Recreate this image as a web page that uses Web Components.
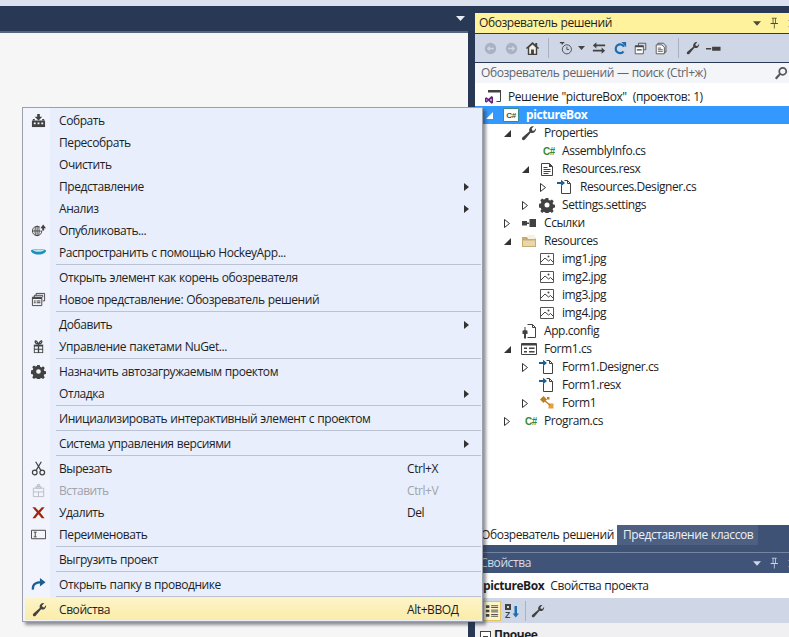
<!DOCTYPE html>
<html lang="ru"><head><meta charset="utf-8"><title>VS</title>
<style>
html,body{margin:0;padding:0;width:789px;height:637px;overflow:hidden;background:#293955}
body{font:12px/16px "Open Sans","Noto Sans","Liberation Sans",sans-serif;color:#1e1e1e;letter-spacing:-.42px;word-spacing:.4px}
</style></head><body>
<vs-shell>
  <vs-editor slot="left">
    <vs-menu>
      <vs-item><vs-icon slot="icon" name="build"></vs-icon>Собрать</vs-item>
      <vs-item>Пересобрать</vs-item>
      <vs-item>Очистить</vs-item>
      <vs-item submenu>Представление</vs-item>
      <vs-item submenu>Анализ</vs-item>
      <vs-item><vs-icon slot="icon" name="publish"></vs-icon>Опубликовать...</vs-item>
      <vs-item><vs-icon slot="icon" name="hockey"></vs-icon>Распространить с помощью HockeyApp...</vs-item>
      <vs-sep></vs-sep>
      <vs-item>Открыть элемент как корень обозревателя</vs-item>
      <vs-item><vs-icon slot="icon" name="newview"></vs-icon>Новое представление: Обозреватель решений</vs-item>
      <vs-sep></vs-sep>
      <vs-item submenu>Добавить</vs-item>
      <vs-item><vs-icon slot="icon" name="gift"></vs-icon>Управление пакетами NuGet...</vs-item>
      <vs-sep></vs-sep>
      <vs-item><vs-icon slot="icon" name="gear"></vs-icon>Назначить автозагружаемым проектом</vs-item>
      <vs-item submenu>Отладка</vs-item>
      <vs-sep></vs-sep>
      <vs-item>Инициализировать интерактивный элемент с проектом</vs-item>
      <vs-sep></vs-sep>
      <vs-item submenu>Система управления версиями</vs-item>
      <vs-sep></vs-sep>
      <vs-item shortcut="Ctrl+X"><vs-icon slot="icon" name="cut"></vs-icon>Вырезать</vs-item>
      <vs-item shortcut="Ctrl+V" disabled><vs-icon slot="icon" name="paste"></vs-icon>Вставить</vs-item>
      <vs-item shortcut="Del"><vs-icon slot="icon" name="del"></vs-icon>Удалить</vs-item>
      <vs-item><vs-icon slot="icon" name="rename"></vs-icon>Переименовать</vs-item>
      <vs-sep></vs-sep>
      <vs-item>Выгрузить проект</vs-item>
      <vs-sep></vs-sep>
      <vs-item><vs-icon slot="icon" name="open"></vs-icon>Открыть папку в проводнике</vs-item>
      <vs-sep></vs-sep>
      <vs-item shortcut="Alt+ВВОД" active><vs-icon slot="icon" name="wrench"></vs-icon>Свойства</vs-item>
    </vs-menu>
  </vs-editor>
  <vs-explorer slot="right">
    <vs-row level="0" icon="solution">Решение "pictureBox"&nbsp; (проектов: 1)</vs-row>
    <vs-row level="1" arrow="open" icon="csproj" selected>pictureBox</vs-row>
    <vs-row level="2" arrow="open" icon="wrench">Properties</vs-row>
    <vs-row level="3" icon="cs">AssemblyInfo.cs</vs-row>
    <vs-row level="3" arrow="open" icon="resx">Resources.resx</vs-row>
    <vs-row level="4" arrow="closed" icon="designer">Resources.Designer.cs</vs-row>
    <vs-row level="3" arrow="closed" icon="gear">Settings.settings</vs-row>
    <vs-row level="2" arrow="closed" icon="refs">Ссылки</vs-row>
    <vs-row level="2" arrow="open" icon="folder">Resources</vs-row>
    <vs-row level="3" icon="image">img1.jpg</vs-row>
    <vs-row level="3" icon="image">img2.jpg</vs-row>
    <vs-row level="3" icon="image">img3.jpg</vs-row>
    <vs-row level="3" icon="image">img4.jpg</vs-row>
    <vs-row level="2" icon="config">App.config</vs-row>
    <vs-row level="2" arrow="open" icon="form">Form1.cs</vs-row>
    <vs-row level="3" arrow="closed" icon="designer">Form1.Designer.cs</vs-row>
    <vs-row level="3" icon="designer">Form1.resx</vs-row>
    <vs-row level="3" arrow="closed" icon="klass">Form1</vs-row>
    <vs-row level="2" arrow="closed" icon="cs">Program.cs</vs-row>
  </vs-explorer>
</vs-shell>
<script>
const ICONS={
build:'<path fill="#424242" d="M1 8h14v7H1z"/><path fill="#424242" d="M2 6.500h2V8H2zM12 6.500h2V8h-2z"/><path fill="#f0f3fb" d="M3 10h2v2H3zM7 10h2v2H7zM11 10h2v2h-2z"/><path fill="#424242" d="M6.600 1h2.800v3H12L8 8 4 4h2.600z"/>',
publish:'<g fill="none" stroke="#424242"><circle cx="6.500" cy="8.500" r="5"/><ellipse cx="6.500" cy="8.500" rx="2.200" ry="5"/><path d="M1.500 8.500h10M6.500 3.500v10"/></g><path fill="#f0f3fb" d="M9.500 2h6v6h-6z"/><path fill="#424242" d="M12 8V5.500h-2L13 1.500l3 4h-2V8z"/>',
hockey:'<path fill="#1a8fc0" d="M0 5.500c2-1.200 14-1.200 16 0 0 2.800-3.200 4.500-8 4.500S0 8.300 0 5.500z"/><path fill="#bfe6ef" d="M1.800 5.400c3-.8 9.400-.8 12.400 0-1 1.200-3.400 1.900-6.200 1.900S2.800 6.600 1.800 5.400z"/>',
newview:'<g fill="none" stroke="#424242"><path d="M5.500 3.500V1.500h9v8h-2"/><path d="M3.500 5.500V3.500h9v2"/><path d="M1.500 5.500h10v9h-10z"/></g><path fill="#424242" d="M1.500 5.500h10v2h-10zM3 9h2v1H3zM6 9h4v1H6zM3 11h2v1H3zM6 11h4v1H6z"/>',
gift:'<path fill="#424242" d="M3 6h10v9H3z"/><path fill="#f0f3fb" d="M4 8h3.300v2.500H4zM8.700 8H12v2.500H8.700zM4 11.500h3.300V14H4zM8.700 11.500H12V14H8.700z"/><path fill="none" stroke="#424242" stroke-width="1.300" d="M8 5.500C5.500 1 4 1.500 4.500 3.500 5 5 7 5.500 8 5.500c1 0 3-.5 3.500-2C12 1.500 10.500 1 8 5.500z"/>',
gear:'<path fill="#424242" fill-rule="evenodd" d="M6.700 1h2.600l.4 2 1.500.6 1.700-1.100 1.800 1.800-1.100 1.700.6 1.500 2 .4v2.600l-2 .4-.6 1.500 1.100 1.700-1.800 1.800-1.700-1.100-1.500.6-.4 2H6.700l-.4-2-1.500-.6-1.700 1.100-1.800-1.800 1.100-1.700-.6-1.500-2-.4V6.900l2-.4.6-1.500-1.100-1.700 1.800-1.800 1.700 1.100 1.500-.6zM8 5.500a2.500 2.500 0 1 0 0 5 2.500 2.500 0 0 0 0-5z"/>',
cut:'<g fill="none" stroke="#424242" stroke-width="1.300"><circle cx="4" cy="12.300" r="2.500"/><circle cx="12" cy="12.300" r="2.500"/><path d="M5.300 10.200 11 .8M10.700 10.200 5 .8"/></g>',
paste:'<g fill="none" stroke="#b9bcc4"><path d="M2.500 5.500h11v9h-11zM5.500 3.500h5v2h-5zM7 1.500h2v2H7zM8 9.500v5M2.500 9.500h11"/></g>',
del:'<path fill="#a1260d" d="M1.500 2.500h3L8 6.200l3.500-3.700h3L9.700 8l4.800 6h-3L8 9.800 4.500 14h-3l4.800-6z"/>',
rename:'<path fill="#f3f5fb" stroke="#424242" d="M.5 3.500h15v9H.5z"/><path fill="none" stroke="#424242" d="M3 5.500h3M3 10.500h3M4.500 5.500v5"/>',
open:'<path fill="none" stroke="#1c5f94" stroke-width="2.400" d="M2 13.500C1.500 8 5 5.500 11 5.500"/><path fill="#1c5f94" d="M9.500 1 15.500 5.500 9.500 10z"/>',
wrench:'<path fill="#424242" d="M15 3.200a4 4 0 0 1-5.300 4.600L3.900 14.600c-.7.800-1.800.900-2.500.200-.7-.7-.6-1.800.2-2.500l6.700-5.800A4 4 0 0 1 13 1.300L10.700 3.600l.5 1.800 1.800.4z"/>',
solution:'<path fill="none" stroke="#424242" d="M3.500 1.500h12v11h-4"/><path fill="#424242" d="M3 1h13v2.500H3z"/><path fill="#68217a" d="M0 9l1.500-.8 2 1.500 3-2.700L8 8v6l-1.500.7-3-2.700-2 1.500L0 13zM1.500 10v2l1-1zM6.500 9.500 5 11l1.500 1.500z"/>',
csproj:'<path fill="#fff" stroke="#3c8b8b" d="M.5 1.500h15v13H.5z"/><text x="8" y="11" text-anchor="middle" font-family="Liberation Sans" font-size="8" font-weight="700" fill="#2b5a3c">C#</text>',
cs:'<text x="10" y="11.500" text-anchor="middle" font-family="Liberation Sans" font-size="10" font-weight="700" fill="#388a34">C#</text>',
resx:'<path fill="#fff" stroke="#424242" d="M2.500 2.500h8l3 3v9h-11z"/><path fill="none" stroke="#424242" d="M4.500 6.500h4M4.500 8.500h7M4.500 10.500h7M4.500 12.500h5"/><path fill="#424242" d="M10 2l4 4h-4z"/>',
designer:'<path fill="#fff" stroke="#424242" d="M4.500 6.500v8h9v-10l-3-3h-3"/><path fill="none" stroke="#424242" d="M10.500 1.500v3h3"/><path fill="#1c5f94" d="M0 3h4V.8L8 4 4 7.200V5H0z"/>',
refs:'<path fill="#424242" d="M1 6h5v4.500H1zM6 7.500h2v1.500H6zM8.500 4h6.500v8H8.500z"/>',
folder:'<path fill="#c9ab72" d="M1 4h5l1.500 1.500H15V14H1z"/><path fill="#e8d6ac" d="M2 7.500h12V13H2z"/><path fill="#f7f1e0" d="M6 2h8v4H7z"/>',
image:'<path fill="#fff" stroke="#555" d="M1.500 2.500h13v11h-13z"/><path fill="none" stroke="#424242" d="M2 11l4-4 3.500 3 2-1.500L14 11"/><circle cx="9.500" cy="5.500" r="1" fill="#424242"/>',
config:'<path fill="#fff" stroke="#424242" d="M6.500 1.500h5l3 3v10h-8"/><path fill="none" stroke="#424242" d="M11.500 1.500v3h3"/><path fill="#424242" d="M3.500 4h1v3l2 .8V11H5v4.500H3V11H1.500V7.800l2-.8z"/>',
form:'<path fill="#fff" stroke="#424242" d="M.5 2.500h15v11H.5z"/><path fill="#424242" d="M1 2.500h14v2H1zM3 6.500h3v1.500H3zM8 6.500h5.500v1.500H8zM3 10h3v1.500H3zM8 10h5.500v1.500H8z"/>',
klass:'<path fill="#c27d1a" d="M1 4.500 4.500 1 8 4.500 4.500 8z"/><path fill="#e0a040" d="M9.500 8.500h5v5h-5z"/><path fill="none" stroke="#c27d1a" stroke-width="1.500" d="M6 6l5 4"/><path fill="#c27d1a" d="M8 2h2.500v2.500H8z"/>',
back:'<circle cx="8" cy="8" r="7" fill="#aab2c2"/><path fill="#cfd6e5" d="M3.500 8 7 4.500V7h5v2H7v2.500z"/>',
fwd:'<circle cx="8" cy="8" r="7" fill="#aab2c2"/><path fill="#cfd6e5" d="M12.500 8 9 4.500V7H4v2h5v2.500z"/>',
home:'<path fill="#424242" d="M8 1 1 7.500l1 1L3 7.600V15h10V7.600l1 .9 1-1L13 5.700V2h-2v1.800z"/><path fill="#f5f2e4" d="M4.500 7 8 3.800 11.500 7v6.500h-2V9h-3v4.500h-2z"/>',
hist:'<circle cx="9" cy="9.500" r="5.200" fill="none" stroke="#424242"/><path fill="none" stroke="#424242" d="M9 6.500v3.200h2.500"/><path fill="#424242" d="M1 1h5v1.500H4.500V4H3V2.500H1z"/>',
sync:'<path fill="#424242" d="M1 5l4-3.500V4h10v2H5v2.500zM15 11l-4 3.500V12H1v-2h10V7.500z"/>',
refresh:'<path fill="none" stroke="#1c6eb4" stroke-width="2.500" d="M12.500 6.500A5 5 0 1 0 12 12"/><path fill="#1c6eb4" d="M9.500 1h5.500v6z"/>',
collapse:'<path fill="none" stroke="#424242" d="M5.500 4.500v-3h9v8h-3"/><path fill="#fff" stroke="#424242" d="M1.500 4.500h10v10h-10z"/><path fill="#424242" d="M1.500 4.500h10v2h-10zM3.500 9h6v1.500h-6z"/>',
allfiles:'<path fill="none" stroke="#424242" d="M3.500 3.500v-2h7l3 3v8h-2"/><path fill="#fff" stroke="#424242" d="M1.500 3.500h7l3 3v8h-10z"/><path fill="none" stroke="#424242" d="M3.500 7.500h4M3.500 9.500h6M3.500 11.500h6"/>',
minus:'<path fill="#424242" d="M0 7.500h5.500v1.500H0zM6.500 6h9v4.500h-9z"/>',
search:'<circle cx="10" cy="6" r="4" fill="none" stroke="#555" stroke-width="2"/><path stroke="#555" stroke-width="2.500" d="M7 9l-5 5.500"/>',
cat:'<path fill="#424242" d="M1 1.500h4v3H1zM1 6.500h4v3H1zM1 11.500h4v3H1z"/><path fill="none" stroke="#424242" d="M7 2h8M7 4h8M7 7h8M7 9h8M7 12h8M7 14h8"/>',
az:'<path fill="#424242" d="M1 1h6v6H1z"/><path fill="#cfd6e5" d="M3 3h2v2H3z"/><text x="1" y="15" font-family="Liberation Sans" font-size="8.500" font-weight="700" fill="#424242">Z</text><path fill="#1c6eb4" d="M10.500 3H13v7.500h2l-3.200 4-3.200-4h1.900z"/>',
pin:'<path fill="none" stroke="currentColor" d="M3.500 1.500h6M5 1.500v6M8 1.500v6"/><path fill="currentColor" d="M2 7.500h9v1H2zM6 8.500h1V14H6z"/>',
close:'<path stroke="currentColor" stroke-width="1.500" d="M2 2l8 8M10 2l-8 8"/>',
down:'<path fill="currentColor" d="M0 0h9L4.500 5z"/>'
};
function svg(n,s=16,extra=''){return `<svg xmlns="http://www.w3.org/2000/svg" width="${s}" height="${s}" viewBox="0 0 16 16" ${extra}>${ICONS[n]||''}</svg>`}
function def(name,css,html,init){
  customElements.define(name,class extends HTMLElement{
    constructor(){super();this.attachShadow({mode:'open'});}
    connectedCallback(){this.shadowRoot.innerHTML=`<style>${css}</style>`+(typeof html==='function'?html(this):html);init&&init(this);}
  });
}
const btn=(n,s=13)=>`<span class="b">${svg(n,s)}</span>`;
const ctl=`<div class="ctl"><svg width="8" height="5" viewBox="0 0 9 5">${ICONS.down}</svg>${svg('pin',13)}<svg class="x" width="11" height="11" viewBox="0 0 12 12">${ICONS.close}</svg></div>`;
def('vs-icon',':host{display:inline-flex;width:15px;height:15px}svg{display:block}',e=>svg(e.getAttribute('name'),15));

def('vs-shell',`
:host{display:grid;grid-template-rows:6px 631px;width:789px;height:637px;overflow:hidden}
.strip{background:#dce1ed}
.main{display:grid;grid-template-columns:468px 314px;column-gap:7px;background:#293955;min-height:0}
`,`<div class="strip"></div><div class="main"><slot name="left"></slot><slot name="right"></slot></div>`);

def('vs-editor',`
:host{display:grid;grid-template-rows:27px 1fr;position:relative;min-height:0}
.bar{display:flex;justify-content:flex-end;align-items:center;padding-right:3px;color:#e8ecf4;border-bottom:2px solid #56647f;box-sizing:border-box}
.bar svg{display:block}
.doc{background:#f6f6f6}
`,`<div class="bar"><svg width="9" height="5" viewBox="0 0 9 5">${ICONS.down}</svg></div><div class="doc"></div><slot></slot>`);

def('vs-menu',`
:host{display:block;position:absolute;left:22px;top:101px;width:461px;height:515px;box-sizing:border-box;z-index:5;
 border:1px solid #9ba0aa;padding:1px 1px 1px;box-shadow:3px 3px 3px rgba(40,44,55,.5);
 background:linear-gradient(90deg,#f1f4fd 0 27px,#e8eefb 27px)}
`,`<slot></slot>`);

def('vs-item',`
:host{display:grid;grid-template-columns:26px 9px 348px 57px 1fr;align-items:center;height:22px;font-size:12px;line-height:16px;white-space:nowrap}
:host([disabled]){color:#a0a3aa}
:host([active]){background:linear-gradient(#fdf4c7,#fbecaa);margin-left:1px;grid-template-columns:25px 9px 348px 57px 1fr}
.ic{display:flex;justify-content:center;padding-left:3px}
.lb{grid-column:3;padding-top:2px}
.sc{grid-column:4;padding-top:2px}
.ar{grid-column:5;display:flex;padding-top:1px}
.ar svg{display:block}
`,e=>`<div class="ic"><slot name="icon"></slot></div><div></div><div class="lb"><slot></slot></div><div class="sc">${e.getAttribute('shortcut')||''}</div><div class="ar">${e.hasAttribute('submenu')?'<svg width="5" height="8" viewBox="0 0 5 8"><path fill="#333" d="M0 0l5 4-5 4z"/></svg>':''}</div>`);

def('vs-sep',`
:host{display:block;height:3px;padding:1px 0 1px 32px;box-sizing:border-box}
div{height:1px;background:#bcc3d3}
`,`<div></div>`);

def('vs-explorer',`
:host{display:grid;grid-template-rows:8px 19px 1px 28px 1px 20px 1fr 20px 8px 20px 25px 25px 14px;min-height:0;overflow:hidden;width:314px}
.title{grid-row:2;background:#fff29d;display:flex;align-items:center;padding-left:4px;height:20px;margin-top:-1px}
.title span{flex:1;padding-bottom:1px}
.ctl{display:flex;align-items:center;gap:8px;color:#4c4c3a;margin-right:-9px}
.ctl svg{display:block}
.ctl .x{margin-left:-3px}
.tbar{grid-row:4;background:#cfd6e5;display:flex;align-items:center;padding-left:5px}
.tbar svg{display:block;flex:none}
.b{width:21px;display:flex;justify-content:center;flex:none}
.sp{width:1px;height:20px;background:#a9b1c2;flex:none}
.s1{margin:0 6px 0 5px}
.s2{margin:0 3px 0 6px}
.dn{margin:0 3px 0 2px;color:#424242}
.search{grid-row:6;background:#f3f5f9;display:flex;align-items:center;padding:0 1px 0 6px;color:#5f6670;white-space:nowrap}
.search span{flex:1}
.tree{grid-row:7;background:#fff;padding-top:5px;overflow:hidden}
.tabs{grid-row:8;background:#3e5275;display:flex;white-space:nowrap}
.tab{width:142px;padding:0 0 0 6px;box-sizing:border-box;line-height:20px;background:#fff}
.tab.off{background:#4d6082;color:#eef1f7;width:141px}
.gap{grid-row:9;background:#3e5275;border-bottom:1px solid #7485a3;box-sizing:border-box}
.phead{grid-row:10;background:#3f5478;color:#d6dce8;display:flex;align-items:center;padding-left:5px}
.phead span{flex:1}
.phead .ctl{color:#cfd6e5}
.pobj{grid-row:11;background:#fff;display:flex;align-items:center;padding-left:8px;gap:6px;white-space:nowrap}
.pobj b{font-weight:700}
.pbar{grid-row:12;background:#cfd6e5;display:flex;align-items:center;padding-left:8px;gap:3px}
.pbar svg{display:block}
.pbar .sp{margin:0 2px}
.cur{background:#fdf4c7;border:1px solid #e5c365;padding:2px 1px}
.pcat{grid-row:13;background:#f0f0f3;font-weight:700;padding:4px 0 0 5px;display:flex;gap:3px;align-items:flex-start;line-height:15px}
.box{width:9px;height:9px;border:1px solid #424242;margin-top:4px;background:linear-gradient(#424242,#424242) center/5px 1px no-repeat #fff;flex:none}
`,`<div class="title"><span>Обозреватель решений</span>${ctl}</div>
<div class="tbar">${btn('back')}${btn('fwd')}${btn('home',15)}<i class="sp s1"></i>${btn('hist',14)}<svg class="dn" width="7" height="4" viewBox="0 0 9 5">${ICONS.down}</svg>${btn('sync',14)}${btn('refresh',14)}${btn('collapse',13)}${btn('allfiles',13)}<i class="sp s2"></i>${btn('wrench',14)}${btn('minus',15)}</div>
<div class="search"><span>Обозреватель решений — поиск (Ctrl+ж)</span>${svg('search',14)}</div>
<div class="tree"><slot></slot></div>
<div class="tabs"><div class="tab">Обозреватель решений</div><div class="tab off">Представление классов</div></div>
<div class="gap"></div>
<div class="phead"><span>Свойства</span>${ctl}</div>
<div class="pobj"><b>pictureBox</b><span>Свойства проекта</span></div>
<div class="pbar"><span class="cur">${svg('cat',14)}</span>${svg('az')}<i class="sp"></i>${svg('wrench',14)}</div>
<div class="pcat"><i class="box"></i>Прочее</div>`);

def('vs-row',`
:host{display:flex;align-items:center;height:18px;white-space:nowrap;color:#1e1e1e}
:host([selected]){background:#3399ff;color:#fff;font-weight:700}
.ar{width:18px;display:flex;justify-content:center;flex:none}
.ic{width:16px;height:16px;flex:none;margin:0 7px 0 5px}
.ic svg{display:block}
svg{display:block}
`,e=>{
  const l=+e.getAttribute('level'),a=e.getAttribute('arrow');
  e.style.paddingLeft=(l===0?3:5+18*(l-1))+'px';
  let ar='';
  if(a==='open')ar=`<svg width="7" height="7" viewBox="0 0 7 7"><path fill="${e.hasAttribute('selected')?'#fff':'#333'}" d="M7 0v7H0z"/></svg>`;
  if(a==='closed')ar='<svg width="6" height="9" viewBox="0 0 6 9"><path fill="#fff" stroke="#333" d="M.5.5l5 4-5 4z"/></svg>';
  return (l===0?'':`<div class="ar">${ar}</div>`)+`<div class="ic" style="${l===0?'margin-left:7px':''}">${svg(e.getAttribute('icon'))}</div><slot></slot>`;
});
</script>
</body></html>
